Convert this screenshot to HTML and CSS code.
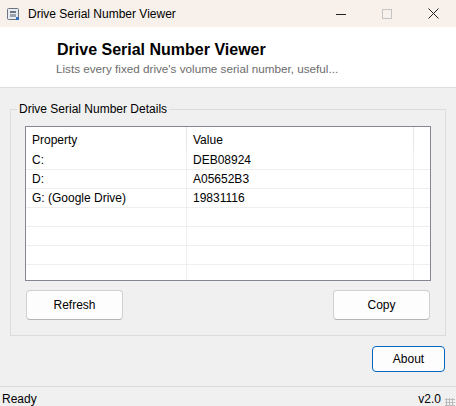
FILE: index.html
```html
<!DOCTYPE html>
<html lang="en">
<head>
    <meta charset="UTF-8">
    <title>Drive Serial Number Viewer</title>
    <link rel="stylesheet" href="styles.css">
</head>
<body>
    <div class="window">
        <div class="titlebar">
            <svg class="app-icon" width="14" height="14" viewBox="0 0 14 14">
                <rect x="1.5" y="1.5" width="11" height="11" rx="1" fill="#e8ebef" stroke="#6b7480"/>
                <rect x="4" y="4" width="6" height="2" fill="#6b7480"/>
                <rect x="4" y="7" width="6" height="3" fill="#9aa3ad"/>
                <rect x="10" y="10" width="3" height="3" fill="#2f6fc0"/>
            </svg>
            <span class="title-text">Drive Serial Number Viewer</span>
            <div class="controls">
                <span class="ctl">
                    <svg width="10" height="10" viewBox="0 0 10 10"><line x1="0" y1="5.5" x2="10" y2="5.5" stroke="#222" stroke-width="1"/></svg>
                </span>
                <span class="ctl">
                    <svg width="10" height="10" viewBox="0 0 10 10"><rect x="0.5" y="0.5" width="9" height="9" fill="none" stroke="#c4c4c4"/></svg>
                </span>
                <span class="ctl">
                    <svg width="11" height="11" viewBox="0 0 11 11"><path d="M0.5 0.5 L10.5 10.5 M10.5 0.5 L0.5 10.5" stroke="#222" stroke-width="1"/></svg>
                </span>
            </div>
        </div>

        <div class="header">
            <div class="header-title">Drive Serial Number Viewer</div>
            <div class="header-sub">Lists every fixed drive's volume serial number, useful...</div>
        </div>

        <fieldset class="group">
            <legend>Drive Serial Number Details</legend>
            <div class="list">
                <div class="list-head">
                    <div class="col col-prop">Property</div>
                    <div class="col col-val">Value</div>
                    <div class="col col-rest"></div>
                </div>
                <div class="list-body" id="rows"></div>
            </div>
            <div class="group-buttons">
                <button class="btn">Refresh</button>
                <button class="btn">Copy</button>
            </div>
        </fieldset>

        <div class="footer-buttons">
            <button class="btn btn-focus">About</button>
        </div>

        <div class="statusbar">
            <span>Ready</span>
            <span class="version">v2.0</span>
            <span class="grip"></span>
        </div>
    </div>

    <script>
        // drive list
        const drives = [
            { prop: "C:", value: "DEB08924" },
            { prop: "D:", value: "A05652B3" },
            { prop: "G: (Google Drive)", value: "19831116" }
        ];

        const rows = document.getElementById("rows");
        for (let i = 0; i < 7; i++) {
            const d = drives[i] || { prop: "", value: "" };
            const row = document.createElement("div");
            row.className = "row";
            row.innerHTML = `
                <div class="col col-prop">${d.prop}</div>
                <div class="col col-val">${d.value}</div>
                <div class="col col-rest"></div>
            `;
            rows.appendChild(row);
        }
    </script>
</body>
</html>
```

FILE: styles.css
```css
body {
    margin: 0;
    padding: 0;
    font-family: "Liberation Sans", Arial, sans-serif;
    font-size: 12px;
    color: #000;
    background-color: #f0f0f0;
}

.window {
    width: 456px;
    height: 406px;
    overflow: hidden;
    display: flex;
    flex-direction: column;
}

.titlebar {
    height: 27px;
    flex-shrink: 0;
    display: flex;
    align-items: center;
    background-color: #f7f0eb;
}

.app-icon {
    margin-left: 6px;
    margin-right: 8px;
}

.title-text {
    font-size: 12px;
}

.controls {
    margin-left: auto;
    display: flex;
    height: 100%;
}

.ctl {
    width: 46px;
    display: flex;
    align-items: center;
    justify-content: center;
}

.header {
    height: 61px;
    flex-shrink: 0;
    background-color: #fff;
    border-bottom: 1px solid #dedede;
    box-sizing: border-box;
    padding: 12px 0 0 57px;
}

.header-title {
    font-size: 16px;
    font-weight: bold;
    line-height: 22px;
}

.header-sub {
    color: #6d6d6d;
    font-size: 11.7px;
    line-height: 16px;
    margin-top: 0;
    margin-left: -1px;
}

.group {
    margin: 13px 10px 0 10px;
    padding: 9px 14px 14px 14px;
    border: 1px solid #dcdcdc;
    height: 235px;
    box-sizing: border-box;
}

.group legend {
    padding: 0 2px;
    margin-left: -8px;
    font-size: 12px;
    line-height: 16px;
}

.list {
    width: 406px;
    height: 155px;
    box-sizing: border-box;
    border: 1px solid #828790;
    background-color: #fff;
    overflow: hidden;
}

.list-head {
    display: flex;
    height: 24px;
}

.list-head .col {
    line-height: 26px;
    border-right: 1px solid #e5e5e5;
}

.list-head .col-rest {
    border-right: none;
}

.row {
    display: flex;
    height: 19px;
    border-bottom: 1px solid #efefef;
    box-sizing: border-box;
}

.row .col {
    line-height: 18px;
    border-right: 1px solid #efefef;
}

.col {
    box-sizing: border-box;
    padding-left: 6px;
    white-space: nowrap;
}

.col-prop {
    width: 161px;
}

.col-val {
    width: 227px;
}

.col-rest {
    flex: 1;
    border-right: none !important;
}

.group-buttons {
    display: flex;
    justify-content: space-between;
    margin-top: 9px;
    padding: 0 1px 0 1px;
}

.btn {
    font-family: "Liberation Sans", Arial, sans-serif;
    font-size: 12px;
    width: 97px;
    height: 30px;
    background-color: #fdfdfd;
    border: 1px solid #d0d0d0;
    border-bottom-color: #b5b5b5;
    border-radius: 4px;
    color: #000;
    padding: 0;
}

.footer-buttons {
    display: flex;
    justify-content: flex-end;
    padding: 10px 11px 0 0;
}

.btn-focus {
    width: 73px;
    height: 26px;
    border: 1px solid #0067c0;
    border-radius: 4px;
}

.statusbar {
    margin-top: auto;
    height: 20px;
    border-top: 1px solid #dadada;
    display: flex;
    align-items: flex-start;
    padding: 4px 0 0 2px;
    box-sizing: border-box;
    font-size: 12px;
    line-height: 16px;
}

.version {
    margin-left: auto;
    margin-right: 4px;
}

.grip {
    width: 10px;
    height: 10px;
    margin-top: 7px;
    margin-right: 1px;
    background-image: radial-gradient(circle, #bcbcbc 1px, transparent 1.2px);
    background-size: 3px 3px;
}
```
